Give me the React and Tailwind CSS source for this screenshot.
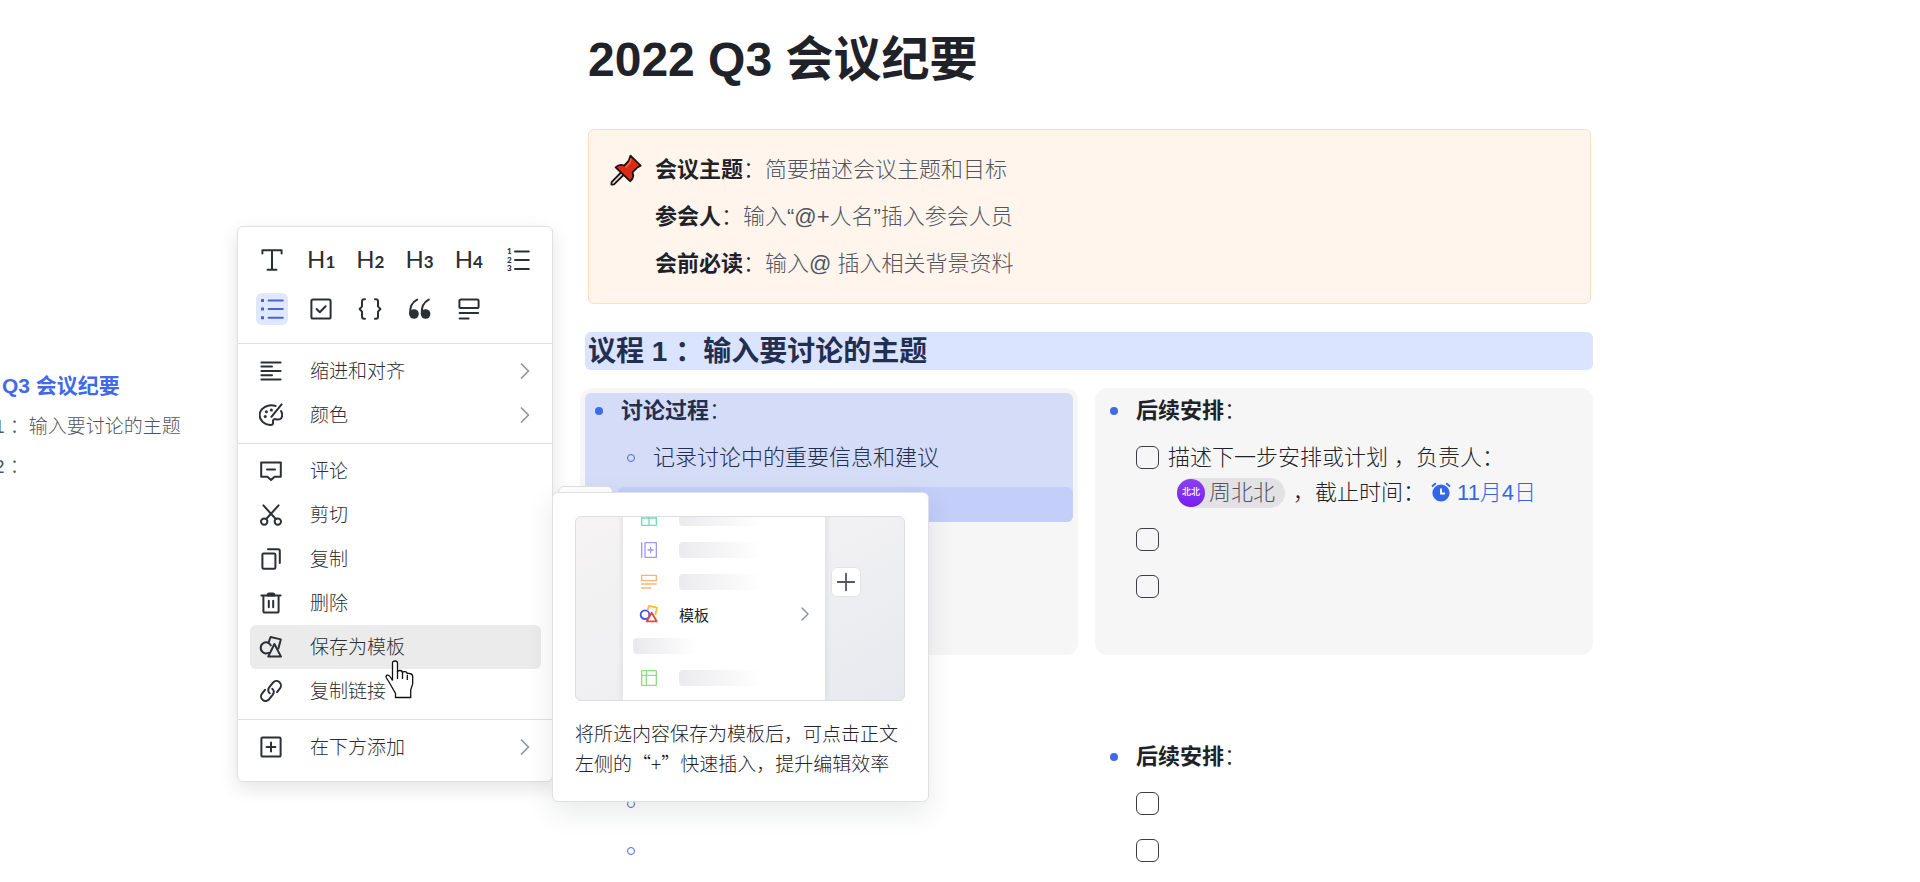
import { ChevronRight } from 'lucide-react'

const FONT = "font-['Liberation_Sans','Noto_Sans_CJK_SC',sans-serif]"
const FONT_CJK = "font-['Noto_Sans_CJK_SC','Liberation_Sans',sans-serif]"

function Icon({ children, className = 'size-6' }) {
  return (
    <svg
      className={`${className} shrink-0`}
      viewBox="0 0 24 24"
      fill="none"
      stroke="currentColor"
      strokeWidth="2"
      strokeLinecap="round"
      strokeLinejoin="round"
      aria-hidden="true"
    >
      {children}
    </svg>
  )
}

function Heading({ level }) {
  return (
    <span className="font-['Lato',sans-serif] text-[24px] leading-8 font-normal whitespace-nowrap">
      H<span className="text-[17px] font-bold">{level}</span>
    </span>
  )
}

const tools = [
  {
    label: '正文',
    icon: (
      <Icon>
        <path d="M2.4 5.6V2.2h19.2v3.4M12 2.2v19.6M7.6 21.8h8.8" />
      </Icon>
    ),
  },
  { label: '标题 1', icon: <Heading level={1} /> },
  { label: '标题 2', icon: <Heading level={2} /> },
  { label: '标题 3', icon: <Heading level={3} /> },
  { label: '标题 4', icon: <Heading level={4} /> },
  {
    label: '有序列表',
    icon: (
      <Icon>
        <path d="M9 3.4h13.8M9 12h13.8M9 21h13.8" />
        <g fill="currentColor" stroke="none" fontSize="8" fontWeight="900" fontFamily="Lato, sans-serif">
          <text x="1" y="6.4">1</text>
          <text x="1" y="15">2</text>
          <text x="1" y="23.4">3</text>
        </g>
      </Icon>
    ),
  },
  {
    label: '无序列表',
    active: true,
    icon: (
      <Icon>
        <path d="M8.6 3.4h14.2M8.6 12h14.2M8.6 20.8h14.2" />
        <g fill="currentColor" stroke="none">
          <path d="M1 2h3v3H1zM1 10.6h3v3H1zM1 19.2h3v3H1z" />
        </g>
      </Icon>
    ),
  },
  {
    label: '任务列表',
    icon: (
      <Icon>
        <rect x="2.4" y="2.4" width="19.2" height="19.2" rx="1.6" />
        <path d="m7.6 12 3.2 3.2 5.8-6" />
      </Icon>
    ),
  },
  {
    label: '代码块',
    icon: (
      <Icon>
        <path d="M7 2.2H6a2 2 0 0 0-2 2v5.2L1.6 12 4 14.6v5.2a2 2 0 0 0 2 2h1M17 2.2h1a2 2 0 0 1 2 2v5.2l2.4 2.6-2.4 2.6v5.2a2 2 0 0 1-2 2h-1" />
      </Icon>
    ),
  },
  {
    label: '引用',
    icon: (
      <Icon>
        <g fill="currentColor" stroke="none">
          <circle cx="6" cy="17" r="4.8" />
          <circle cx="17.6" cy="17" r="4.8" />
        </g>
        <path d="M2.2 16.6C1.8 10.2 4 5.2 9.2 2.6M13.8 16.6c-.4-6.4 1.8-11.4 7-14" />
      </Icon>
    ),
  },
  {
    label: '高亮块',
    icon: (
      <Icon>
        <rect x="2.4" y="2.4" width="19.2" height="8.6" rx="1.6" />
        <path d="M2.6 16h18.6M2.6 21.4h9" />
      </Icon>
    ),
  },
]

const groups = [
  [
    {
      label: '缩进和对齐',
      more: true,
      icon: (
        <Icon>
          <path d="M2.4 3.4h19.2M2.4 7.6h10.6M2.4 12h19.2M2.4 16.2h10.6M2.4 20.6h19.2" />
        </Icon>
      ),
    },
    {
      label: '颜色',
      more: true,
      icon: (
        <Icon>
          <path d="M16.6 3C8.6.6.6 5.6.6 12.2c0 5.4 5 9.4 10.4 9.8 2.8.2 3.4-1.4 3-3.2-.4-1.8.8-3 2.8-2.6 3.2.6 6 .2 6.400-3.6.2-2-.4-3.4-1.2-4.6" />
          <path d="M22.6 1.4 12.4 13.8" />
          <g fill="currentColor" stroke="none">
            <circle cx="6.2" cy="13.6" r="1.5" />
            <circle cx="7.4" cy="8.8" r="1.5" />
            <circle cx="12.4" cy="7" r="1.5" />
          </g>
        </Icon>
      ),
    },
  ],
  [
    {
      label: '评论',
      icon: (
        <Icon>
          <path d="M2.2 3.6h19.6v14.2h-6.2L12 21l-3.6-3.2H2.2z" />
          <path d="M8 10.4h8" />
        </Icon>
      ),
    },
    {
      label: '剪切',
      icon: (
        <Icon>
          <circle cx="5.2" cy="18.6" r="3.2" />
          <circle cx="18.8" cy="18.6" r="3.2" />
          <path d="M4.4 2.4 16.8 16M19.6 2.4 7.2 16" />
        </Icon>
      ),
    },
    {
      label: '复制',
      icon: (
        <Icon>
          <rect x="3.4" y="6.4" width="13" height="15.4" rx="1.2" />
          <path d="M9 2.2h10.2a1.6 1.6 0 0 1 1.6 1.6V16" />
        </Icon>
      ),
    },
    {
      label: '删除',
      icon: (
        <Icon>
          <path d="M2.4 4.4h19.2M4.4 4.4V20a1.6 1.6 0 0 0 1.6 1.6h12a1.6 1.6 0 0 0 1.6-1.6V4.4M9.8 9.8v6.4M14.2 9.8v6.4" />
          <path d="M8.6 4.4c0-1.4.6-2 1.6-2h3.6c1 0 1.6.6 1.6 2z" fill="currentColor" />
        </Icon>
      ),
    },
    {
      label: '保存为模板',
      hover: true,
      icon: (
        <Icon>
          <path d="M9.6 17.8A5.5 5.5 0 1 1 9.4 7.8L11.6 2l10.2 2.4-2.4 9" />
          <path d="M9.4 7.8c1 .6 1.9 1.4 2.4 2.6" />
          <path d="M15.4 9 22 21.6H9.2z" />
        </Icon>
      ),
    },
    {
      label: '复制链接',
      icon: (
        <Icon>
          <path d="M10.8 14.2c-2-1.4-2-4-.6-5.8l3.6-4.6c1.6-2 4.4-2.4 6.4-.8s2.4 4.4.8 6.4l-3 3.8" />
          <path d="M13.2 9.8c2 1.4 2 4 .6 5.8l-3.6 4.6c-1.6 2-4.4 2.4-6.4.8s-2.4-4.4-.8-6.4l3-3.8" />
        </Icon>
      ),
    },
  ],
  [
    {
      label: '在下方添加',
      more: true,
      icon: (
        <Icon>
          <rect x="2.4" y="2.4" width="19.2" height="19.2" rx="1.2" />
          <path d="M12 7.6v8.8M7.6 12h8.8" />
        </Icon>
      ),
    },
  ],
]

function BlockMenu() {
  return (
    <div
      role="menu"
      className={`absolute left-[237px] top-[226px] z-10 w-[316px] rounded-md border border-[#dee0e3] bg-white pb-1.5 text-[#2b2f36] shadow-[0_6px_18px_rgba(31,35,41,0.12)] ${FONT}`}
    >
      <div className="grid grid-cols-[repeat(6,32px)] justify-between gap-y-[17px] px-[18px] pt-[17px] pb-[18px]">
        {tools.map((t) => (
          <button
            key={t.label}
            aria-label={t.label}
            className={`flex size-8 items-center justify-center rounded-md ${t.active ? 'bg-[#dfe8fd] text-[#4a63d8]' : ''}`}
          >
            {t.icon}
          </button>
        ))}
      </div>
      {groups.map((items) => (
        <div key={items[0].label} className="border-t border-[#dee0e3] pt-[5px] pr-[11px] pb-1.5 pl-3">
          {items.map((item) => (
            <button
              key={item.label}
              role="menuitem"
              className={`flex h-11 w-full items-center gap-[27px] rounded-md pr-1.5 pl-[9px] text-left text-[19px] font-light ${item.hover ? 'bg-[#ebebec]' : ''}`}
            >
              {item.icon}
              <span className="flex-1">{item.label}</span>
              {item.more && <ChevronRight className="size-7 -mr-1 text-[#8f959e]" strokeWidth={1.5} />}
            </button>
          ))}
        </div>
      ))}
    </div>
  )
}

function Placeholder({ color, icon }) {
  return (
    <div className="flex h-8 items-center gap-[22px] pl-[18px]">
      <Icon className={`size-4 ${color}`}>{icon}</Icon>
      <div className="h-4 w-[84px] rounded-sm bg-linear-to-r from-[#ebebee] to-white" />
    </div>
  )
}

function TemplateTip() {
  return (
    <div
      role="tooltip"
      className={`absolute left-[552px] top-[492px] z-20 w-[377px] rounded-md border border-[#dee0e3] bg-white pt-[23px] pr-[23px] pb-[23px] pl-[22px] shadow-[0_10px_28px_rgba(31,35,41,0.10)] ${FONT_CJK}`}
    >
      <div className="flex h-[185px] overflow-hidden rounded-md border border-[#dcdee2] bg-linear-to-br from-[#f5f3f3] via-[#f0f0f2] to-[#e6e9ef]">
        <div className="-mt-[15px] ml-[47px] w-[202px] shrink-0 bg-white shadow-[0_0_6px_rgba(31,35,41,0.12)]">
          <Placeholder color="text-[#6fdcbc]" icon={<path d="M1 1h22v22H1zM1 12h22M12 1v22" />} />
          <Placeholder color="text-[#a596ee]" icon={<path d="M1 1v22M6 1h17v22H6zM14.5 8v8M10.5 12h8" />} />
          <Placeholder color="text-[#f7b671]" icon={<path d="M1 2h22v8H1zM1 15h22M1 21h14" />} />
          <div className="flex h-8 items-center pr-2 pl-[18px]">
            <svg className="mr-[22px] size-4 overflow-visible" viewBox="0 0 24 24" fill="none" strokeWidth="2.8" strokeLinejoin="round">
              <path stroke="#fdbf2d" d="m10 6 2-6 12 2.5-2.5 11" />
              <circle stroke="#4954e6" cx="6" cy="13" r="6.5" />
              <path stroke="#e8463a" d="m16 10 7.5 13H8.5z" />
            </svg>
            <span className="flex-1 text-[15px] font-normal text-[#1f2329]">模板</span>
            <ChevronRight className="size-6 text-[#8f959e]" strokeWidth={1.5} />
          </div>
          <div className="flex h-8 items-center pl-2.5">
            <div className="h-4 w-16 rounded-sm bg-linear-to-r from-[#e9e9ec] to-white" />
          </div>
          <Placeholder color="text-[#8fdd86]" icon={<path d="M1 1h22v22H1zM1 8h22M8 1v22" />} />
        </div>
        <div className="mt-[50px] ml-1.5 flex size-[30px] items-center justify-center rounded-md border border-[#e3e4e8] bg-white text-[#55585e]">
          <Icon className="size-[22px]">
            <path d="M12 3v18M3 12h18" />
          </Icon>
        </div>
      </div>
      <p className="mt-[17px] text-[19px] leading-[30px] font-light text-[#1f2329]">
        将所选内容保存为模板后，可点击正文
        <br />
        左侧的“+”快速插入，提升编辑效率
      </p>
    </div>
  )
}

function Pin() {
  return (
    <svg className="mt-0.5 size-8 shrink-0" viewBox="0 0 32 32" stroke="#1c1512" strokeWidth="1.8" strokeLinejoin="round" aria-hidden="true">
      <path d="M11.5 18 1.6 28.2 1.4 30.6l2.6-.2L14 20.5z" fill="#e9e4df" />
      <path d="m20.5 1.6 10.2 10-3.8 2.2-4.4 4.6c1.6 3.6.8 6.4-2.4 8.8L5.6 13.4c2.8-2.8 5.4-3.2 8.6-1.8l4.6-5z" fill="#dd2a12" />
      <path d="m21 4.5-1 4-4.5 5" fill="none" stroke="#f0664e" strokeWidth="1.5" />
    </svg>
  )
}

const notes = [
  ['会议主题', '简要描述会议主题和目标'],
  ['参会人', '输入“@+人名”插入参会人员'],
  ['会前必读', '输入@ 插入相关背景资料'],
]

function Bullet({ children }) {
  return (
    <div className="flex h-[35px] items-center pl-2.5">
      <span className="mr-[18px] size-2 rounded-full bg-[#3f6ae8]" />
      <strong className="font-bold">{children}</strong>：
    </div>
  )
}

function SubBullet({ children }) {
  return (
    <div className="flex h-[35px] items-center pl-[42px]">
      <span className="mr-[18px] size-2 rounded-full border border-[#3f6ae8]" />
      {children}
    </div>
  )
}

function Task({ children, label }) {
  return (
    <div className="flex gap-[9px] pl-9">
      <input
        type="checkbox"
        aria-label={label}
        className="my-[6px] size-[23px] shrink-0 appearance-none rounded-md border border-[#3b3e44] bg-transparent"
      />
      {children}
    </div>
  )
}

function AlarmIcon() {
  return (
    <svg className="mr-1.5 inline-block size-5 align-[-2px]" viewBox="0 0 20 20" aria-hidden="true">
      <circle cx="10" cy="11" r="8.6" fill="#3467e8" />
      <path d="M10 6.5v5h4" fill="none" stroke="#fff" strokeWidth="1.8" />
      <path d="M1 4.5 4.8 1.2M19 4.5l-3.8-3.3" stroke="#3467e8" strokeWidth="1.8" />
    </svg>
  )
}

function Cursor() {
  return (
    <svg className="pointer-events-none absolute left-[385px] top-[660px] z-30 h-10 w-[30px]" viewBox="0 0 30 40" aria-hidden="true">
      <path
        d="M7.5 3Q7.5 1 10 1t2.5 2v9q0-1.5 2.5-1.5t2.5 2.5q0-1.5 2.4-1.3t2.4 2.6q0-1.3 2.5-.8 2.9.5 2.9 3.2v7l-2 6.3v7.5H10.5v-4L4 22 1.2 17.5Q.5 15.5 2.5 15.2t5 5.3z"
        fill="#fff"
        stroke="#111"
        strokeWidth="1.3"
      />
      <path d="M12.5 11v8M17.5 13v6M22.3 15v5" stroke="#111" strokeWidth="1.3" />
    </svg>
  )
}

function App() {
  return (
    <div className={`relative flex min-h-screen overflow-hidden bg-white text-[22px] leading-[35px] font-light text-[#1f2329] ${FONT}`}>
      <nav className="w-[580px] shrink-0 pt-[366px]">
        <ul className="text-[19px] leading-[40px] whitespace-nowrap text-[#51565e]">
          <li className="pl-0.5">
            <a href="#top" className="text-[21px] font-bold text-[#3f6ae8]">Q3 会议纪要</a>
          </li>
          <li className="-ml-1.5">
            <a href="#agenda-1">1 ：输入要讨论的主题</a>
          </li>
          <li className="-ml-1.5">
            <a href="#agenda-2">2 ：</a>
          </li>
        </ul>
      </nav>

      <main className="flex-1 pt-7 pr-[327px]">
        <h1 id="top" className="pl-2 text-[48px] leading-[64px] font-bold">2022 Q3 会议纪要</h1>

        <section className="mt-[37px] mr-0.5 ml-2 flex gap-[13px] rounded-md border border-[#fbdfbf] bg-[#fff5ed] pt-[22px] pb-[22px] pl-[21px]">
          <Pin />
          <div className="flex flex-col gap-3">
            {notes.map(([name, hint]) => (
              <p key={name}>
                <strong className="font-bold">{name}</strong>：<span className="text-[#51565e]">{hint}</span>
              </p>
            ))}
          </div>
        </section>

        <h2 id="agenda-1" className="mt-7 ml-[5px] rounded-md bg-[#dbe4ff] pt-0.5 pl-[3px] text-[28px] leading-[36px] font-bold text-[#232f50]">
          议程 1 ：输入要讨论的主题
        </h2>

        <div className="mt-[18px] grid grid-cols-2 gap-[17px]">
          <section className="min-h-[267px] rounded-xl bg-[#f6f6f7] px-[5px] py-[5px]">
            <div className="flex flex-col gap-3 overflow-hidden rounded-md bg-[#d4dcf8] text-[#232f50]">
              <Bullet>讨论过程</Bullet>
              <SubBullet>记录讨论中的重要信息和建议</SubBullet>
              <div className="ml-[33px] h-[35px] rounded-md bg-[#c3cff9]" />
            </div>
          </section>
          <section className="flex min-h-[267px] flex-col gap-3 rounded-xl bg-[#f6f6f7] px-[5px] py-[5px]">
            <Bullet>后续安排</Bullet>
            <Task label="描述下一步安排或计划">
              <div>
                <p>描述下一步安排或计划 ，负责人：</p>
                <p className="flex items-center pl-[9px]">
                  <span className="mr-2 flex h-[30px] items-center gap-1 rounded-full bg-[#e2e2e5] pr-2.5 text-[#51565e]">
                    <span className="flex size-7 items-center justify-center rounded-full bg-linear-to-b from-[#8a3ff0] to-[#7a1bf2] text-[9px] font-medium text-white">
                      北北
                    </span>
                    周北北
                  </span>
                  ，截止时间：
                  <a href="#due" className="ml-1.5 text-[#3467e8]">
                    <AlarmIcon />
                    11月4日
                  </a>
                </p>
              </div>
            </Task>
            <Task label="待办 2" />
            <Task label="待办 3" />
          </section>
        </div>

        <div id="agenda-2" className="mt-20 grid grid-cols-2 gap-[17px]">
          <section className="flex flex-col gap-3 px-[5px] pt-[51px]">
            <SubBullet />
            <SubBullet />
          </section>
          <section className="flex flex-col gap-3 px-[5px] py-1">
            <Bullet>后续安排</Bullet>
            <Task label="待办 4" />
            <Task label="待办 5" />
          </section>
        </div>
      </main>

      <BlockMenu />
      <div className="absolute left-[558px] top-[486px] z-10 h-8 w-[55px] rounded-md border border-[#dee0e3] bg-white" />
      <TemplateTip />
      <Cursor />
    </div>
  )
}

export default App
